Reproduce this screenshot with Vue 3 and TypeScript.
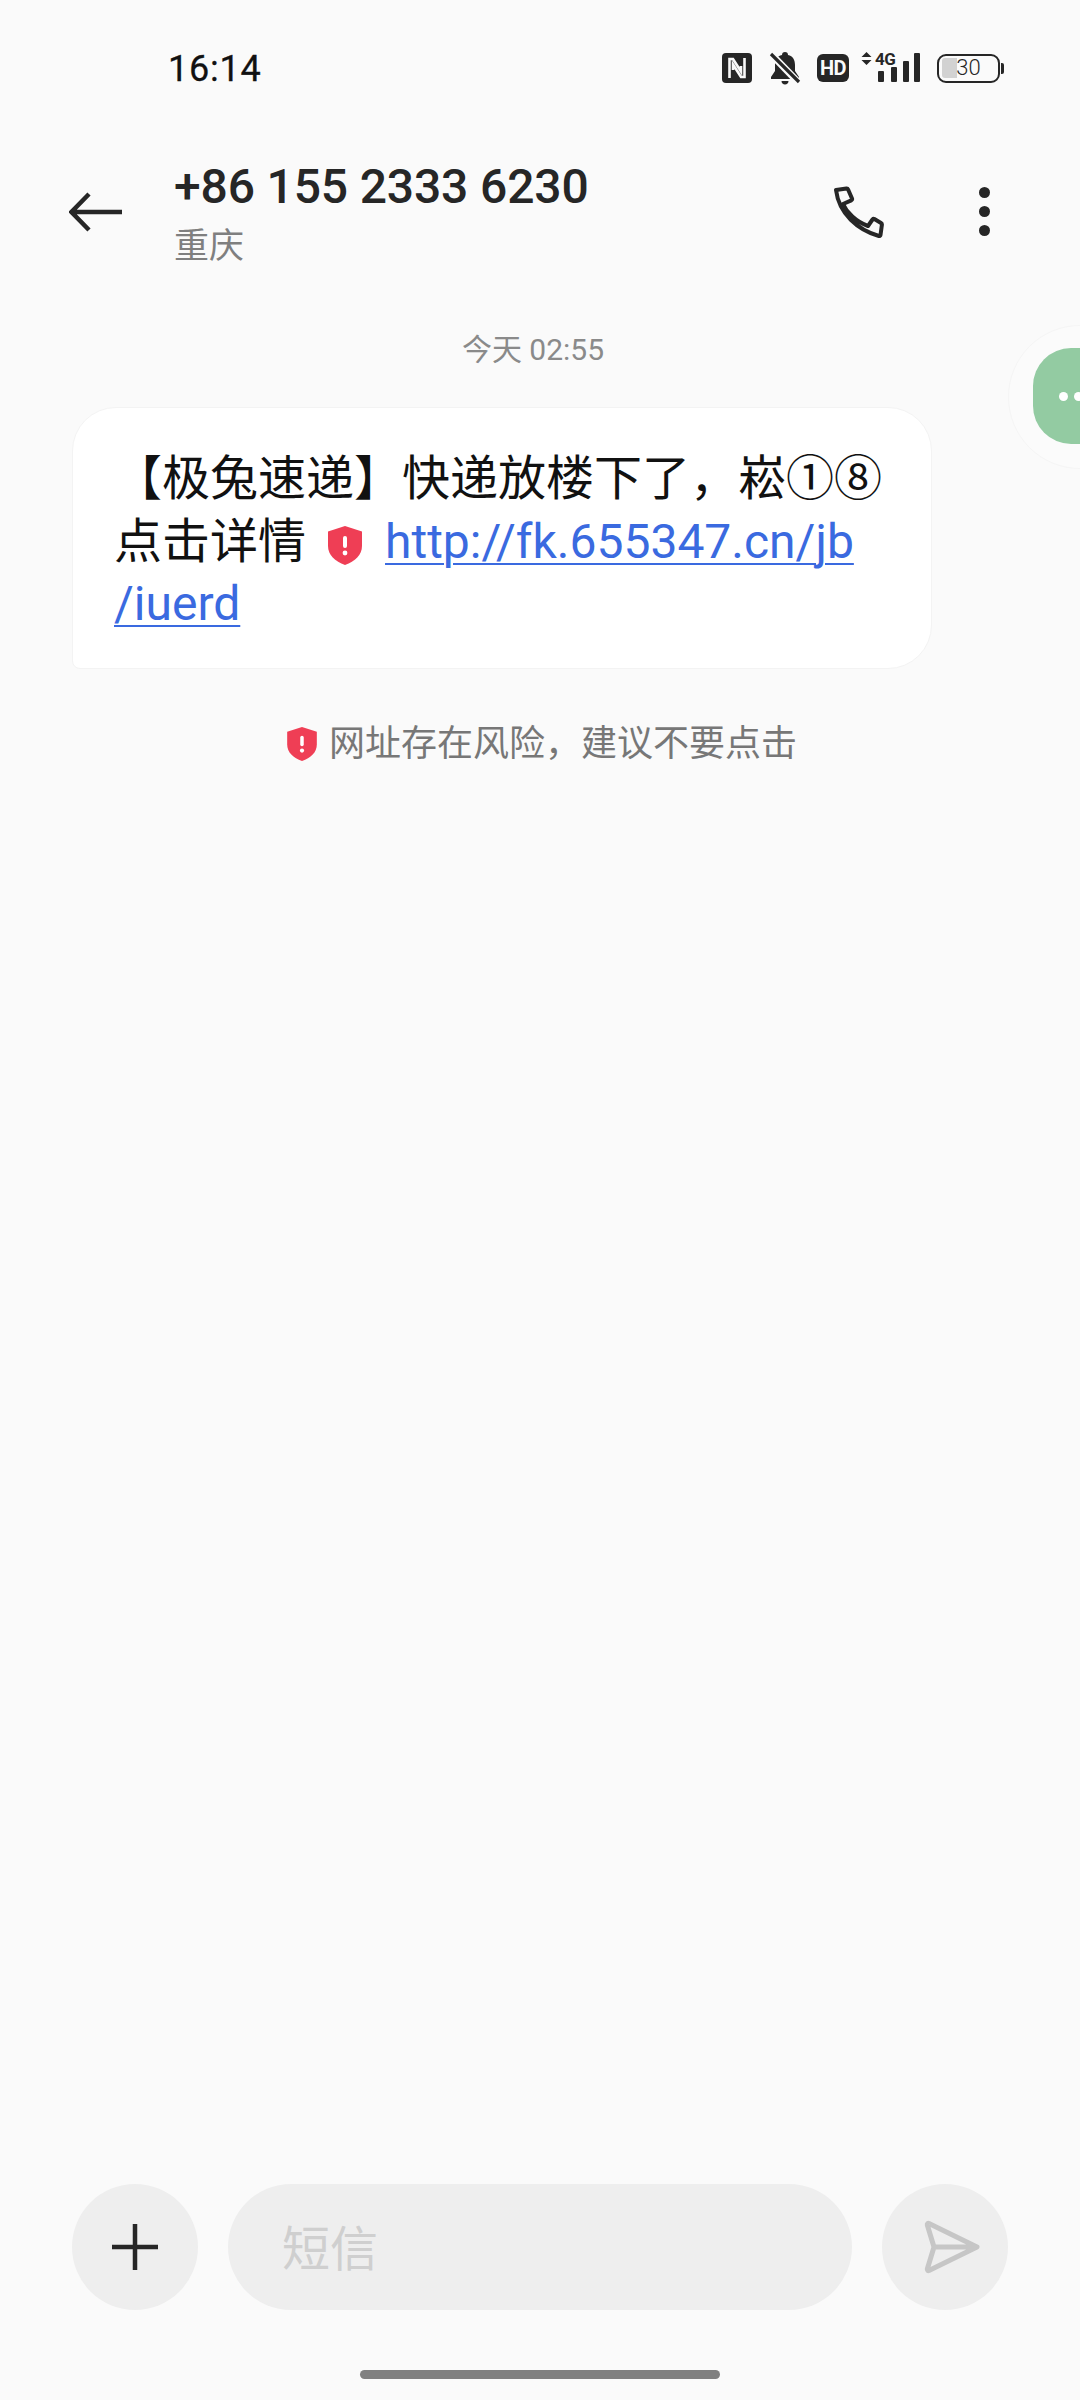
<script setup lang="ts">
const signalBars = [
  { x: 18, y: 18, h: 11 },
  { x: 31, y: 14, h: 15 },
  { x: 43, y: 8, h: 21 },
  { x: 54, y: 0, h: 29 },
];
</script>

<template>
  <div class="screen">
    <div class="status-bar">
      <span class="status-bar__time">16:14</span>
      <div class="status-bar__icons">
        <svg class="icon-nfc" viewBox="0 0 30 30" width="30" height="30" aria-hidden="true">
          <rect width="30" height="30" rx="4" fill="#262626" />
          <path d="M7.500 25V6h3.500l8 12.500V13M22.500 5v19H19l-8-12.500V17" fill="none" stroke="#fafafa" stroke-width="2.600" stroke-linejoin="miter" />
        </svg>
        <svg class="icon-bell" viewBox="0 0 32 34" width="32" height="34" aria-hidden="true">
          <path d="M16 1c2 0 3 1 3 3 5 1 7 5 7 10v6l4 6v2H2v-2l4-6v-6c0-5 2-9 7-10 0-2 1-3 3-3z" fill="#262626" />
          <path d="M12.500 30h7c0 2-1.500 3.500-3.500 3.500s-3.500-1.500-3.500-3.500z" fill="#262626" />
          <path d="M2 3l28 29" stroke="#fafafa" stroke-width="7" />
          <path d="M2 3l28 28" stroke="#262626" stroke-width="3.200" />
        </svg>
        <span class="icon-hd">HD</span>
        <div class="icon-signal">
          <svg class="icon-signal__arrows" viewBox="0 0 11 13" width="11" height="13" aria-hidden="true">
            <path d="M5.500 0L10.500 5H.5zM5.500 13L.5 8h10z" fill="#262626" />
          </svg>
          <span class="icon-signal__net">4G</span>
          <svg class="icon-signal__bars" viewBox="0 0 60 29" width="60" height="29" aria-hidden="true">
            <rect v-for="bar in signalBars" :key="bar.x" :x="bar.x" :y="bar.y" width="6" :height="bar.h" rx="1" fill="#262626" />
          </svg>
        </div>
        <div class="battery">
          <div class="battery__body">
            <span class="battery__level" />
            <span class="battery__text">30</span>
          </div>
          <span class="battery__nub" />
        </div>
      </div>
    </div>

    <header class="title-bar">
      <svg class="title-bar__back" viewBox="0 0 54 40" width="54" height="40" aria-hidden="true">
        <path d="M53 20H3M20 2L2.500 20 20 38" fill="none" stroke="#262626" stroke-width="4.500" />
      </svg>
      <div class="title-bar__text">
        <div class="title-bar__number">+86 155 2333 6230</div>
        <div class="title-bar__region">重庆</div>
      </div>
      <svg class="title-bar__phone" viewBox="0 0 50 52" width="50" height="52" aria-hidden="true">
        <path
          d="M2 4l10.500-1.500c.8-.1 1.300.3 1.600 1L18 12.500c.3.800 0 1.400-.7 1.800L9 18c3.500 8 12.500 17.500 25 22l4.500-6.500c.5-.6 1.200-.8 1.900-.4L47 37c.7.400 1 1 .9 1.800L46.500 49c-.1.800-.8 1.300-1.600 1C24 44 5 28 2 4z"
          fill="none"
          stroke="#262626"
          stroke-width="4"
          stroke-linejoin="round"
        />
      </svg>
      <div class="title-bar__more">
        <i /><i /><i />
      </div>
    </header>

    <main class="thread">
      <div class="thread__date">今天 02:55</div>
      <div class="bubble">
        【极兔速递】快递放楼下了，崧①⑧<br />点击详情<svg class="bubble__shield" viewBox="0 0 34 39" width="34" height="39" aria-hidden="true">
          <path d="M17 0l17 5.500V20c0 9-7 15.500-17 19C7 35.500 0 29 0 20V5.500z" fill="#ef3e55" />
          <rect x="15" y="10" width="4" height="12" rx="2" fill="#fff" />
          <circle cx="17" cy="27" r="2.400" fill="#fff" />
        </svg><a class="bubble__link">http://fk.655347.cn/jb<br />/iuerd</a>
      </div>
      <div class="risk">
        <svg viewBox="0 0 34 39" width="30" height="34" aria-hidden="true">
          <path d="M17 0l17 5.500V20c0 9-7 15.500-17 19C7 35.500 0 29 0 20V5.500z" fill="#ef3e55" />
          <rect x="15" y="10" width="4" height="12" rx="2" fill="#fff" />
          <circle cx="17" cy="27" r="2.400" fill="#fff" />
        </svg>
        <span>网址存在风险，建议不要点击</span>
      </div>
    </main>

    <footer class="composer">
      <div class="composer__round">
        <svg viewBox="0 0 46 46" width="46" height="46" aria-hidden="true">
          <path d="M23 0v46M0 23h46" stroke="#262626" stroke-width="4.500" />
        </svg>
      </div>
      <div class="composer__input">短信</div>
      <div class="composer__round">
        <svg class="composer__send" viewBox="0 0 58 56" width="58" height="56" aria-hidden="true">
          <path
            d="M6 4.500L54 28 6 51.500c-1 .4-2-.4-1.700-1.500L11 28 4.300 6c-.3-1.100.7-1.900 1.700-1.500zM11 28h43"
            fill="none"
            stroke="#c6c6c6"
            stroke-width="5"
            stroke-linejoin="round"
          />
        </svg>
      </div>
    </footer>
    <div class="home-bar" />

    <div class="float-ball">
      <div class="float-ball__shape">
        <i /><i />
      </div>
    </div>
  </div>
</template>

<style>
html,
body {
  margin: 0;
  background: #fafafa;
}
</style>

<style scoped>
.screen {
  position: relative;
  display: flex;
  flex-direction: column;
  width: 1080px;
  height: 2400px;
  overflow: hidden;
  background: #fafafa;
  color: #262626;
  font-family: Roboto, "Noto Sans CJK SC", sans-serif;
}

.status-bar {
  display: flex;
  align-items: center;
  justify-content: space-between;
  height: 40px;
  margin-top: 48px;
  padding: 0 76px 0 168px;
}

.status-bar__time {
  padding-top: 2px;
  color: #111;
  font-size: 36px;
  letter-spacing: 0.8px;
  -webkit-text-stroke: 0.3px #111;
}

.status-bar__icons {
  display: flex;
  align-items: center;
}

.icon-bell {
  margin-left: 17px;
}

.icon-hd {
  width: 32px;
  height: 28px;
  margin-left: 16px;
  border-radius: 6px;
  background: #262626;
  color: #fafafa;
  font-size: 20px;
  font-weight: 700;
  line-height: 28px;
  letter-spacing: -0.5px;
  text-align: center;
}

.icon-signal {
  position: relative;
  width: 60px;
  height: 30px;
  margin-left: 11px;
}

.icon-signal__arrows {
  position: absolute;
  top: -1px;
  left: 1px;
}

.icon-signal__net {
  position: absolute;
  top: -3px;
  left: 15px;
  font-size: 17px;
  font-weight: 700;
  line-height: 18px;
  letter-spacing: -0.5px;
}

.icon-signal__bars {
  position: absolute;
  top: 0;
  left: 0;
}

.battery {
  display: flex;
  align-items: center;
  margin-left: 17px;
}

.battery__body {
  position: relative;
  display: flex;
  align-items: center;
  justify-content: center;
  box-sizing: border-box;
  width: 63px;
  height: 29px;
  border: 2.5px solid #262626;
  border-radius: 9px;
}

.battery__level {
  position: absolute;
  top: 2.5px;
  bottom: 2.5px;
  left: 2.5px;
  width: 15px;
  border-radius: 3px 0 0 3px;
  background: #d2d2d2;
}

.battery__text {
  position: relative;
  font-size: 22px;
  font-weight: 300;
  line-height: 24px;
}

.battery__nub {
  width: 3px;
  height: 11px;
  margin-left: 1px;
  border-radius: 0 2px 2px 0;
  background: #262626;
}

.title-bar {
  display: flex;
  align-items: flex-start;
  height: 135px;
  margin-top: 72px;
  padding: 0 90px 0 69px;
}

.title-bar__back {
  margin-top: 32px;
}

.title-bar__text {
  flex: 1;
  margin-left: 51px;
}

.title-bar__number {
  margin-top: -1px;
  font-size: 48px;
  font-weight: 500;
  line-height: 56px;
  letter-spacing: -0.15px;
}

.title-bar__region {
  margin-top: 9px;
  color: #7f7f7f;
  font-size: 35px;
  line-height: 46px;
}

.title-bar__phone {
  margin-top: 26px;
}

.title-bar__more {
  display: flex;
  flex-direction: column;
  gap: 8px;
  margin: 27px 0 0 95px;
}

.title-bar__more i {
  display: block;
  width: 11px;
  height: 11px;
  border-radius: 50%;
  background: #262626;
}

.thread {
  flex: 1;
  padding: 0 72px;
}

.thread__date {
  margin-top: 35px;
  padding-right: 14px;
  color: #8a8a8a;
  font-size: 30px;
  line-height: 40px;
  text-align: center;
}

.bubble {
  box-sizing: border-box;
  width: 860px;
  height: 262px;
  margin-top: 37px;
  padding: 40px 0 0 41px;
  border: 1px solid #f3f3f3;
  border-radius: 44px 44px 44px 8px;
  background: #fff;
  color: #111;
  font-size: 48px;
  line-height: 62.5px;
  white-space: nowrap;
}

.bubble__shield {
  margin: 0 23px 0 22px;
  vertical-align: -7px;
}

.bubble__link {
  color: #3a6ae0;
  text-decoration: underline;
  text-decoration-thickness: 2px;
  text-underline-offset: 5px;
}

.risk {
  display: flex;
  align-items: center;
  justify-content: center;
  gap: 12px;
  margin-top: 51px;
  padding-left: 4px;
  color: #777;
  font-size: 36px;
  line-height: 48px;
}

.composer {
  display: flex;
  gap: 30px;
  padding: 0 72px;
}

.composer__round {
  display: flex;
  flex-shrink: 0;
  align-items: center;
  justify-content: center;
  width: 126px;
  height: 126px;
  border-radius: 50%;
  background: #eee;
}

.composer__send {
  margin-left: 14px;
}

.composer__input {
  flex: 1;
  height: 126px;
  padding-left: 54px;
  border-radius: 63px;
  background: #eee;
  color: #cfcfcf;
  font-size: 48px;
  line-height: 132px;
}

.home-bar {
  width: 360px;
  height: 9px;
  margin: 60px 0 21px 360px;
  border-radius: 5px;
  background: #808080;
}

.float-ball {
  position: absolute;
  top: 325px;
  left: 1008px;
  width: 142px;
  height: 142px;
  border: 1px solid #f5f5f5;
  border-radius: 50%;
  background: #fbfbfb;
}

.float-ball__shape {
  display: flex;
  gap: 6px;
  align-items: center;
  width: 96px;
  height: 96px;
  margin: 22px 0 0 24px;
  padding-left: 26px;
  box-sizing: border-box;
  border-radius: 38px;
  background: #93cba2;
}

.float-ball__shape i {
  display: block;
  width: 9px;
  height: 9px;
  border-radius: 50%;
  background: #fff;
}
</style>
